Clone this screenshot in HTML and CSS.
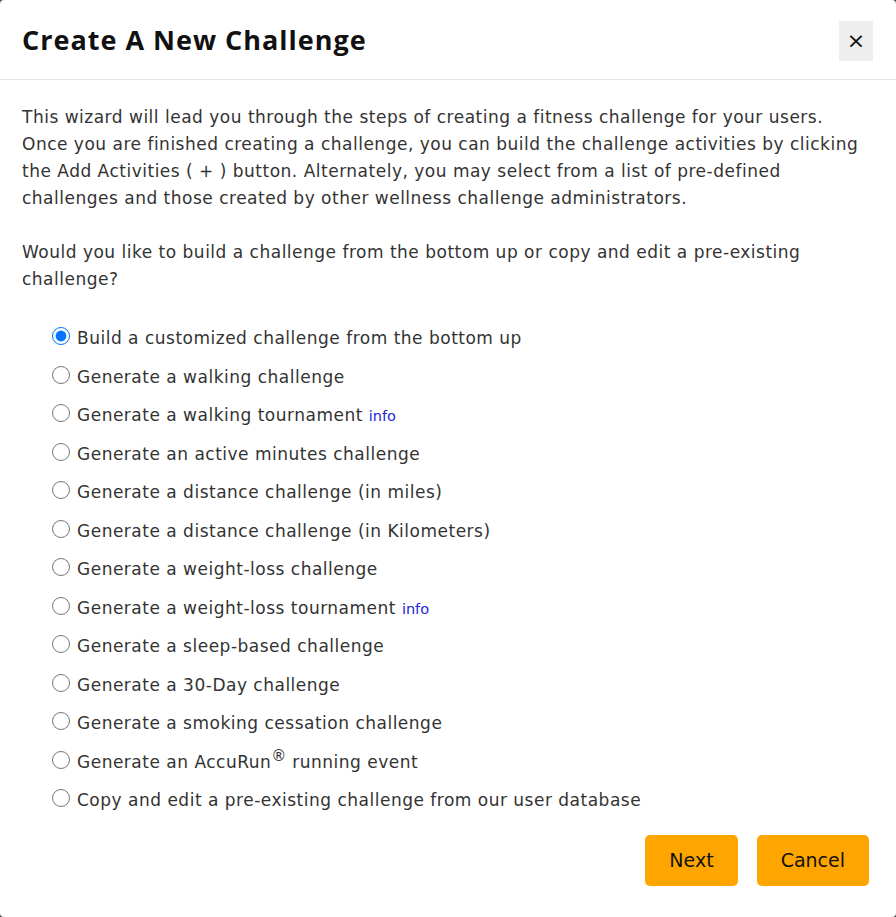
FILE: index.html
```html
<!DOCTYPE html>
<html lang="en">
<head>
<meta charset="utf-8">
<title>Create A New Challenge</title>
<link rel="stylesheet" href="styles.css">
</head>
<body>
<div class="modal">
  <header class="modal-header">
    <h1 class="modal-title">Create A New Challenge</h1>
    <button class="close-btn" type="button" aria-label="Close">&times;</button>
  </header>
  <div class="modal-body">
    <p class="intro">This wizard will lead you through the steps of creating a fitness challenge for your users. Once you are finished creating a challenge, you can build the challenge activities by clicking the Add Activities ( + ) button. Alternately, you may select from a list of pre-defined challenges and those created by other wellness challenge administrators.</p>
    <p class="intro intro-last">Would you like to build a challenge from the bottom up or copy and edit a pre-existing challenge?</p>
    <ul class="options">
      <li><label class="option"><input type="radio" name="opt" checked> <span>Build a customized challenge from the bottom up</span></label></li>
      <li><label class="option"><input type="radio" name="opt"> <span>Generate a walking challenge</span></label></li>
      <li><label class="option"><input type="radio" name="opt"> <span>Generate a walking tournament <a class="info" href="#">info</a></span></label></li>
      <li><label class="option"><input type="radio" name="opt"> <span>Generate an active minutes challenge</span></label></li>
      <li><label class="option"><input type="radio" name="opt"> <span>Generate a distance challenge (in miles)</span></label></li>
      <li><label class="option"><input type="radio" name="opt"> <span>Generate a distance challenge (in Kilometers)</span></label></li>
      <li><label class="option"><input type="radio" name="opt"> <span>Generate a weight-loss challenge</span></label></li>
      <li><label class="option"><input type="radio" name="opt"> <span>Generate a weight-loss tournament <a class="info" href="#">info</a></span></label></li>
      <li><label class="option"><input type="radio" name="opt"> <span>Generate a sleep-based challenge</span></label></li>
      <li><label class="option"><input type="radio" name="opt"> <span>Generate a 30-Day challenge</span></label></li>
      <li><label class="option"><input type="radio" name="opt"> <span>Generate a smoking cessation challenge</span></label></li>
      <li><label class="option"><input type="radio" name="opt"> <span>Generate an AccuRun<sup class="reg">&reg;</sup> running event</span></label></li>
      <li><label class="option"><input type="radio" name="opt"> <span>Copy and edit a pre-existing challenge from our user database</span></label></li>
    </ul>
    <div class="actions">
      <button class="btn" type="button">Next</button>
      <button class="btn" type="button">Cancel</button>
    </div>
  </div>
</div>
</body>
</html>
```

FILE: styles.css
```css
html, body {
  margin: 0;
  padding: 0;
  background: #4a4a4a;
}
.modal {
  width: 896px;
  height: 917px;
  background: #fff;
  border-radius: 4px;
  box-sizing: border-box;
  overflow: hidden;
  font-family: "DejaVu Sans", Verdana, sans-serif;
  color: #333;
}
.modal-header {
  height: 80px;
  box-sizing: border-box;
  border-bottom: 1px solid #e5e5e5;
  display: flex;
  align-items: center;
  justify-content: space-between;
  padding: 0 23px 0 22px;
}
.modal-title {
  margin: 0;
  font-family: "Open Sans", sans-serif;
  font-weight: 700;
  font-size: 27px;
  letter-spacing: 1px;
  color: #111;
}
.close-btn {
  width: 34px;
  height: 40px;
  border: none;
  background: #eeeeee;
  font-family: "DejaVu Sans", sans-serif;
  font-size: 22px;
  color: #111;
  padding: 0;
  margin-top: 2px;
  cursor: pointer;
}
.modal-body {
  padding: 24px 22px 31px 22px;
}
.intro {
  margin: 0 0 27px 0;
  font-size: 17px;
  letter-spacing: 0.5px;
  line-height: 27px;
}
.intro-last {
  margin-bottom: 26px;
}
.options {
  list-style: none;
  margin: 0;
  padding: 0 0 0 30px;
  display: flex;
  flex-direction: column;
}
.options li {
  height: 38.5px;
  display: flex;
  align-items: center;
}
.option {
  display: flex;
  align-items: center;
  gap: 7px;
  font-size: 17px;
  letter-spacing: 0.5px;
}
.option input {
  width: 18px;
  height: 18px;
  margin: 0;
  position: relative;
  top: -2px;
}
.info {
  color: #2323d8;
  font-size: 14.5px;
  letter-spacing: 0;
  text-decoration: none;
}
.reg {
  font-size: 15px;
  line-height: 0;
  letter-spacing: 0;
}
.actions {
  display: flex;
  justify-content: flex-end;
  gap: 19px;
  margin-top: 15px;
  padding-right: 5px;
}
.btn {
  height: 51px;
  padding: 0 24px;
  background: #ffa500;
  border: none;
  border-radius: 5px;
  font-family: "DejaVu Sans", Verdana, sans-serif;
  font-size: 19px;
  color: #111;
  cursor: pointer;
}
```
